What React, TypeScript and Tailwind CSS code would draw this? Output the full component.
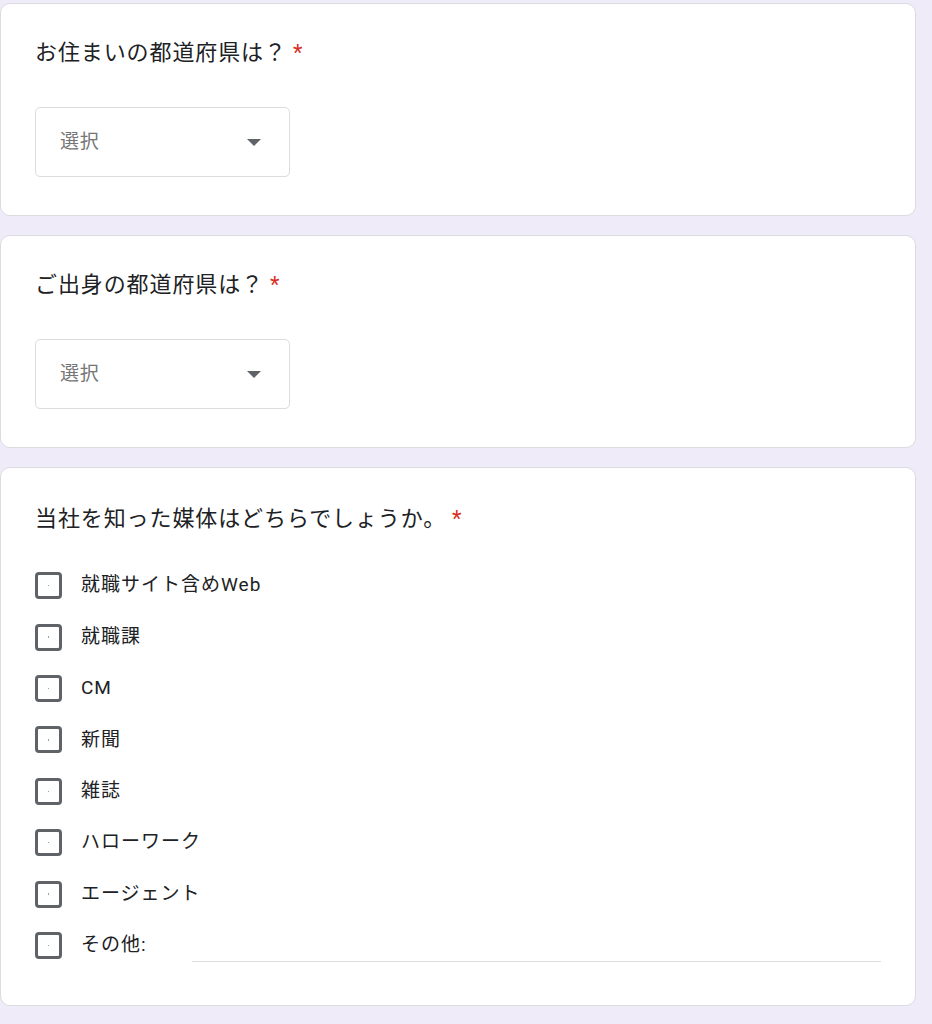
import React from "react";

const font = { fontFamily: 'Roboto, "Noto Sans CJK JP", sans-serif' };

function Title({ text }: { text: string }) {
  return (
    <div className="text-[22px] leading-[33px] text-[#202124] tracking-[0.9px]">
      {text}
      <span className="ml-[6px] text-[#d93025]">*</span>
    </div>
  );
}

function Select() {
  return (
    <div className="mt-[38px] flex h-[70px] w-[255px] items-center justify-between rounded-[5px] border border-[#dadce0] pl-[24px] pr-[28px]">
      <span className="text-[19px] tracking-[0.8px] text-[#757575]">選択</span>
      <svg width="14" height="7" viewBox="0 0 14 7">
        <path d="M0 0 L14 0 L7 7 Z" fill="#5f6368" />
      </svg>
    </div>
  );
}

function Checkbox() {
  return (
    <div className="flex h-[27px] w-[27px] shrink-0 items-center justify-center rounded-[4px] border-[3px] border-[#5f6368]">
      <div className="h-[1.5px] w-[1.5px] bg-[#9aa0a6]" />
    </div>
  );
}

const options = [
  "就職サイト含めWeb",
  "就職課",
  "CM",
  "新聞",
  "雑誌",
  "ハローワーク",
  "エージェント",
];

export default function App() {
  return (
    <div className="min-h-[1024px] bg-[#f0ebf8] pt-[3px]" style={font}>
      <div className="flex w-[916px] flex-col gap-[19px]">
        <div className="rounded-[10px] border border-[#dadce0] bg-white px-[34px] pb-[38px] pt-[32px]">
          <Title text="お住まいの都道府県は？" />
          <Select />
        </div>
        <div className="rounded-[10px] border border-[#dadce0] bg-white px-[34px] pb-[38px] pt-[32px]">
          <Title text="ご出身の都道府県は？" />
          <Select />
        </div>
        <div className="rounded-[10px] border border-[#dadce0] bg-white px-[34px] pb-[34px] pt-[34px]">
          <Title text="当社を知った媒体はどちらでしょうか。" />
          <div className="mt-[25px] flex flex-col">
            {options.map((o) => (
              <div key={o} className="flex h-[51.4px] items-center gap-[19px]">
                <Checkbox />
                <span className="text-[19px] tracking-[1px] text-[#202124]">{o}</span>
              </div>
            ))}
            <div className="flex h-[51.4px] items-center gap-[19px]">
              <Checkbox />
              <span className="w-[92px] text-[19px] tracking-[1px] text-[#202124]">その他:</span>
              <div className="mt-[32px] h-px flex-1 bg-[#dadce0]" />
            </div>
          </div>
        </div>
      </div>
    </div>
  );
}
